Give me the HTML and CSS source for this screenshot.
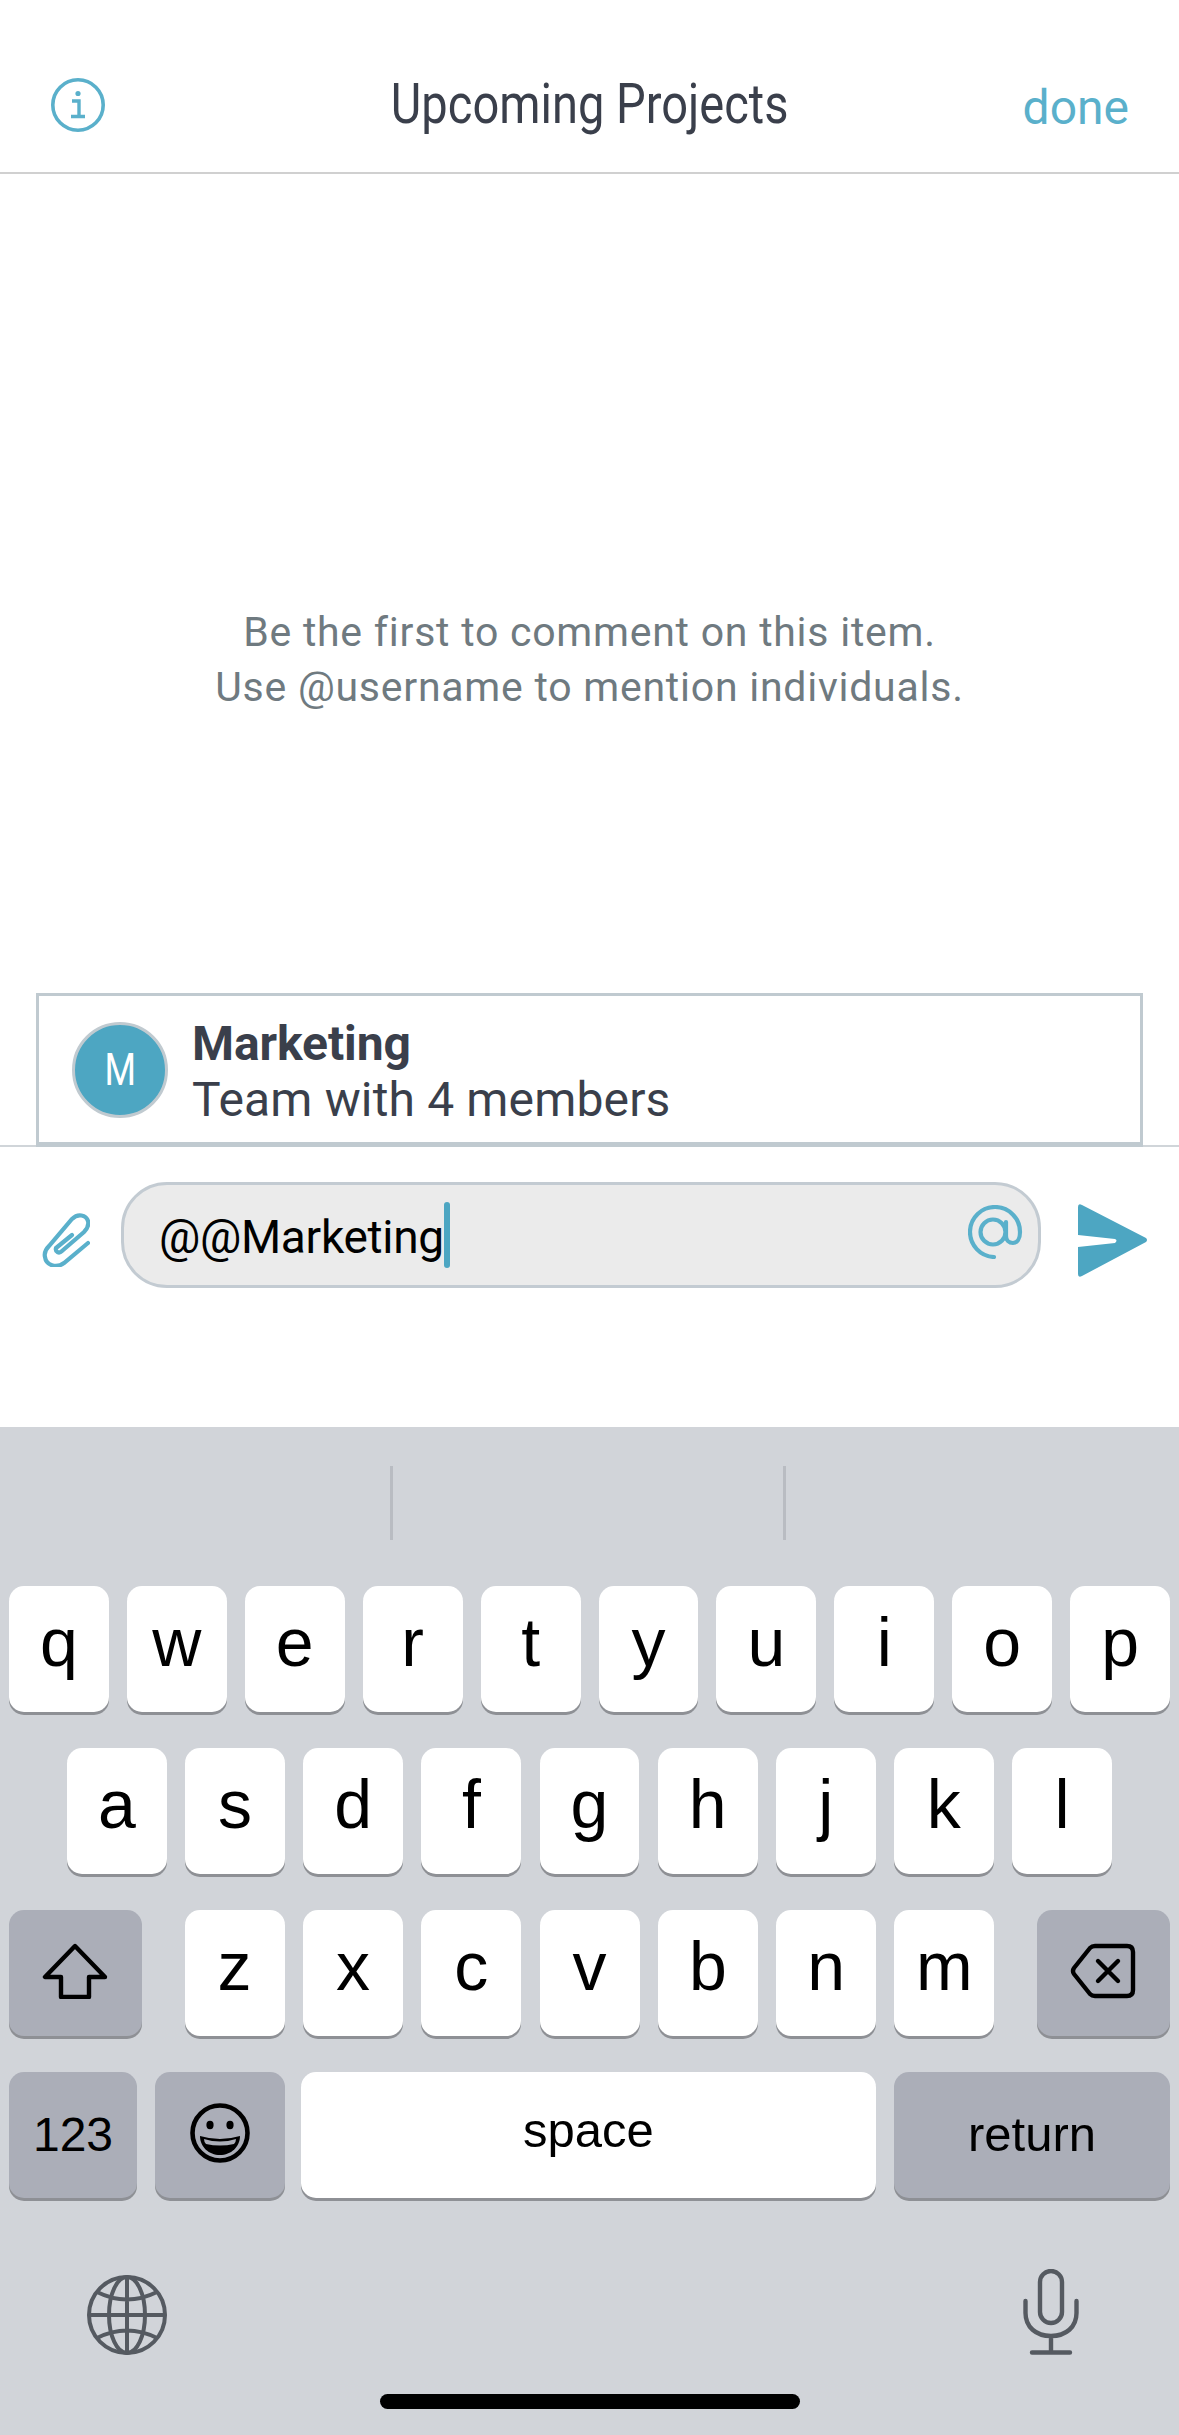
FILE: index.html
```html
<!DOCTYPE html>
<html lang="en">
<head>
    <meta charset="UTF-8">
    <title>Upcoming Projects</title>
    <link rel="stylesheet" href="styles.css">
</head>
<body>
    <div class="screen">
        <header class="topbar">
            <svg class="info-icon" viewBox="0 0 54 54" fill="none" stroke="#5ab0cb">
                <circle cx="27" cy="27" r="25.2" stroke-width="3.6"/>
                <circle cx="27" cy="15.5" r="2.6" fill="#5ab0cb" stroke="none"/>
                <path d="M21 23H28V38M20 38.5H34" stroke-width="3.4"/>
            </svg>
            <h1 class="title"><span>Upcoming Projects</span></h1>
            <span class="done">done</span>
        </header>

        <main class="comments">
            <p class="empty">Be the first to comment on this item.<br>Use @username to mention individuals.</p>
        </main>

        <div class="mention">
            <div class="avatar"><span>M</span></div>
            <div class="mention-text">
                <strong>Marketing</strong>
                <span>Team with 4 members</span>
            </div>
        </div>

        <div class="composer">
            <svg class="clip-icon" viewBox="0 0 48 54" fill="none" stroke="#5ab0cb" stroke-width="4.2" stroke-linecap="round">
                <path d="M46 30L22 50C14 56 4 52 3 44C2 40 4 36 7 33L30 6C36 0 44 2 46 8C47 12 45 16 42 19L20 38C17 41 13 39 14 35L30 22"/>
            </svg>
            <div class="input">
                <span class="input-text">@@Marketing</span><span class="caret"></span>
                <svg class="at-icon" viewBox="0 0 55 54" fill="none" stroke="#5ab0cb" stroke-width="4.2" stroke-linecap="round">
                    <path d="M26 52A25 25 0 1 1 52 27C52 34 49 38 45 38C41 38 38 35 38 31V17"/>
                    <circle cx="25" cy="27" r="12.5"/>
                </svg>
            </div>
            <svg class="send-icon" viewBox="0 0 70 74">
                <path fill="#4da6c2" d="M0 3Q0-1 4 1L68 34Q70 36 68 38L4 72Q0 74 0 70V43L37 39Q40 36 37 35L0 31Z"/>
            </svg>
        </div>

        <div class="keyboard">
            <div class="suggest">
                <div class="suggest-cell"></div>
                <div class="suggest-cell"></div>
                <div class="suggest-cell"></div>
            </div>

            <div class="rows">
                <div class="row">
                    <div class="key">q</div><div class="key">w</div><div class="key">e</div><div class="key">r</div><div class="key">t</div>
                    <div class="key">y</div><div class="key">u</div><div class="key">i</div><div class="key">o</div><div class="key">p</div>
                </div>
                <div class="row row-home">
                    <div class="key">a</div><div class="key">s</div><div class="key">d</div><div class="key">f</div><div class="key">g</div>
                    <div class="key">h</div><div class="key">j</div><div class="key">k</div><div class="key">l</div>
                </div>
                <div class="row row-shift">
                    <div class="key fn shift">
                        <svg class="kb-glyph" viewBox="0 0 66 56" fill="none" stroke="#000" stroke-width="4.4" stroke-linejoin="round">
                            <path d="M33 3L3 34H19V54H47V34H63Z"/>
                        </svg>
                    </div>
                    <div class="letters">
                        <div class="key">z</div><div class="key">x</div><div class="key">c</div><div class="key">v</div>
                        <div class="key">b</div><div class="key">n</div><div class="key">m</div>
                    </div>
                    <div class="key fn shift">
                        <svg class="kb-glyph" viewBox="0 0 64 56" fill="none" stroke="#000" stroke-width="4.4" stroke-linejoin="round" stroke-linecap="round">
                            <path d="M24 3H56Q62 3 62 9V47Q62 53 56 53H24Q21 53 19 51L3 31Q1 28 3 25L19 5Q21 3 24 3Z"/>
                            <path d="M27 18L47 38M47 18L27 38"/>
                        </svg>
                    </div>
                </div>
                <div class="row">
                    <div class="key fn num small">123</div>
                    <div class="key fn emoji">
                        <svg class="emoji-icon" viewBox="0 0 60 60">
                            <circle cx="30" cy="30" r="27.5" fill="none" stroke="#000" stroke-width="4.6"/>
                            <ellipse cx="20" cy="22" rx="3.6" ry="4.2"/>
                            <ellipse cx="40" cy="22" rx="3.6" ry="4.2"/>
                            <path d="M10 33Q30 39 50 33C50 44 41 52 30 52C19 52 10 44 10 33Z"/>
                            <path fill="#abaeb8" d="M14 36Q30 41 46 36Q46 39 44 41Q30 44 16 41Q14 39 14 36Z"/>
                        </svg>
                    </div>
                    <div class="key space small">space</div>
                    <div class="key fn return small">return</div>
                </div>
            </div>

            <div class="kb-bottom">
                <svg class="globe-icon" viewBox="0 0 80 80" fill="none" stroke="#555a61" stroke-width="4">
                    <circle cx="40" cy="40" r="38"/>
                    <ellipse cx="40" cy="40" rx="18" ry="38"/>
                    <path d="M40 2V78M2 40H78M10 17Q40 32 70 17M10 63Q40 48 70 63"/>
                </svg>
                <svg class="mic-icon" viewBox="0 0 56 86" fill="none" stroke="#555a61" stroke-width="4.4" stroke-linecap="round">
                    <rect x="17" y="2" width="22" height="52" rx="11"/>
                    <path d="M2.500 32V44C2.500 58 13 67 28 67C43 67 53.500 58 53.500 44V32M28 67V83M9 83.500H47"/>
                </svg>
            </div>
            <div class="home-bar"></div>
        </div>
    </div>
</body>
</html>
```

FILE: styles.css
```css
:root {
    --teal: #5ab0cb;
    --teal-dark: #4da6c2;
    --ink: #3a3f4b;
    --edge: #c0cad0;
    --kb-bg: #d1d4d9;
    --kb-fn: #abaeb8;
}

* {
    box-sizing: border-box;
}

body {
    margin: 0;
    background-color: #ffffff;
    font-family: 'Roboto', sans-serif;
}

.screen {
    width: 1179px;
    height: 2435px;
    display: flex;
    flex-direction: column;
    overflow: hidden;
}

.topbar {
    height: 174px;
    padding: 78px 50px 0 51px;
    border-bottom: 2px solid #d0d0d0;
    display: grid;
    grid-template-columns: 1fr auto 1fr;
    align-items: start;
}

.info-icon {
    width: 54px;
    height: 54px;
}

.title {
    margin: -6px 0 0 0;
    font-size: 56px;
    font-weight: 400;
    line-height: 64px;
    color: var(--ink);
    white-space: nowrap;
}

.title span {
    display: inline-block;
    transform: scaleX(0.84);
}

.done {
    justify-self: end;
    font-size: 48px;
    line-height: 60px;
    color: var(--teal);
}

.comments {
    height: 819px;
    padding-top: 431px;
}

.empty {
    margin: 0;
    text-align: center;
    font-size: 41px;
    letter-spacing: 0.75px;
    line-height: 55px;
    color: #6f7a80;
}

.mention {
    height: 154px;
    margin: 0 36px -2px 36px;
    padding: 26px 0 0 33px;
    border: 3px solid var(--edge);
    border-bottom-width: 5px;
    display: flex;
    gap: 24px;
    background-color: #ffffff;
    position: relative;
}

.avatar {
    width: 96px;
    height: 96px;
    flex-shrink: 0;
    border: 3px solid var(--edge);
    border-radius: 50%;
    background-color: var(--teal-dark);
    color: #ffffff;
    font-size: 44px;
    display: flex;
    align-items: center;
    justify-content: center;
}

.avatar span {
    display: inline-block;
    transform: scaleX(0.82);
}

.mention-text {
    display: flex;
    flex-direction: column;
    margin-top: -6px;
    color: var(--ink);
    font-size: 48px;
    letter-spacing: 0.15px;
    line-height: 56px;
}

.mention-text strong {
    letter-spacing: -0.1px;
}

.composer {
    height: 282px;
    padding: 35px 0 0 42px;
    border-top: 2px solid #d0d5d9;
    display: flex;
    align-items: flex-start;
}

.clip-icon {
    width: 48px;
    height: 54px;
    margin: 31px 31px 0 0;
    flex-shrink: 0;
}

.input {
    width: 920px;
    height: 106px;
    padding: 0 15px 0 35px;
    border: 3px solid #c3cbd2;
    border-radius: 46px;
    background-color: #ebebeb;
    display: flex;
    align-items: center;
}

.input-text {
    padding-top: 3px;
    font-size: 46px;
    letter-spacing: -0.3px;
    color: #000000;
}

.caret {
    width: 6px;
    height: 66px;
    border-radius: 3px;
    background-color: var(--teal-dark);
}

.at-icon {
    width: 55px;
    height: 54px;
    margin: -6px 0 0 auto;
}

.send-icon {
    width: 70px;
    height: 74px;
    margin: 22px 0 0 37px;
    flex-shrink: 0;
}

.keyboard {
    flex: 1;
    background-color: var(--kb-bg);
}

.suggest {
    height: 159px;
    padding-top: 39px;
    display: grid;
    grid-template-columns: repeat(3, 1fr);
    align-items: start;
}

.suggest-cell {
    height: 74px;
    border-right: 3px solid #b9bcc2;
}

.suggest-cell:last-child {
    border-right: none;
}

.rows {
    padding: 0 9px;
    display: flex;
    flex-direction: column;
    gap: 36px;
}

.row {
    display: flex;
    gap: 18px;
}

.row-home {
    padding: 0 58px;
    gap: 18.2px;
}

.row-shift {
    justify-content: space-between;
}

.letters {
    display: flex;
    gap: 18.3px;
}

.key {
    width: 100px;
    height: 126px;
    padding-bottom: 15px;
    border-radius: 15px;
    background-color: #ffffff;
    box-shadow: 0 3px 0 #8e9095;
    font-family: 'Liberation Sans', sans-serif;
    font-size: 68px;
    color: #000000;
    display: flex;
    align-items: center;
    justify-content: center;
}

.fn {
    background-color: var(--kb-fn);
}

.small {
    font-size: 49px;
}

.shift {
    width: 133px;
    padding: 0 2px 4px 0;
}

.num {
    width: 128px;
    padding-bottom: 2px;
    font-size: 48px;
}

.emoji {
    width: 130px;
    padding-bottom: 4px;
}

.space {
    width: 575px;
    margin: 0 0 0 -2px;
    padding-bottom: 10px;
}

.return {
    width: 276px;
    padding-bottom: 2px;
}

.kb-glyph {
    width: 66px;
    height: 56px;
}

.emoji-icon {
    width: 60px;
    height: 60px;
}

.kb-bottom {
    height: 86px;
    margin-top: 71px;
    padding: 0 100px 0 87px;
    display: flex;
    align-items: flex-end;
    justify-content: space-between;
}

.globe-icon {
    width: 80px;
    height: 80px;
}

.mic-icon {
    width: 56px;
    height: 86px;
}

.home-bar {
    width: 420px;
    height: 15px;
    margin: 39px auto 0 auto;
    border-radius: 8px;
    background-color: #000000;
}
```
